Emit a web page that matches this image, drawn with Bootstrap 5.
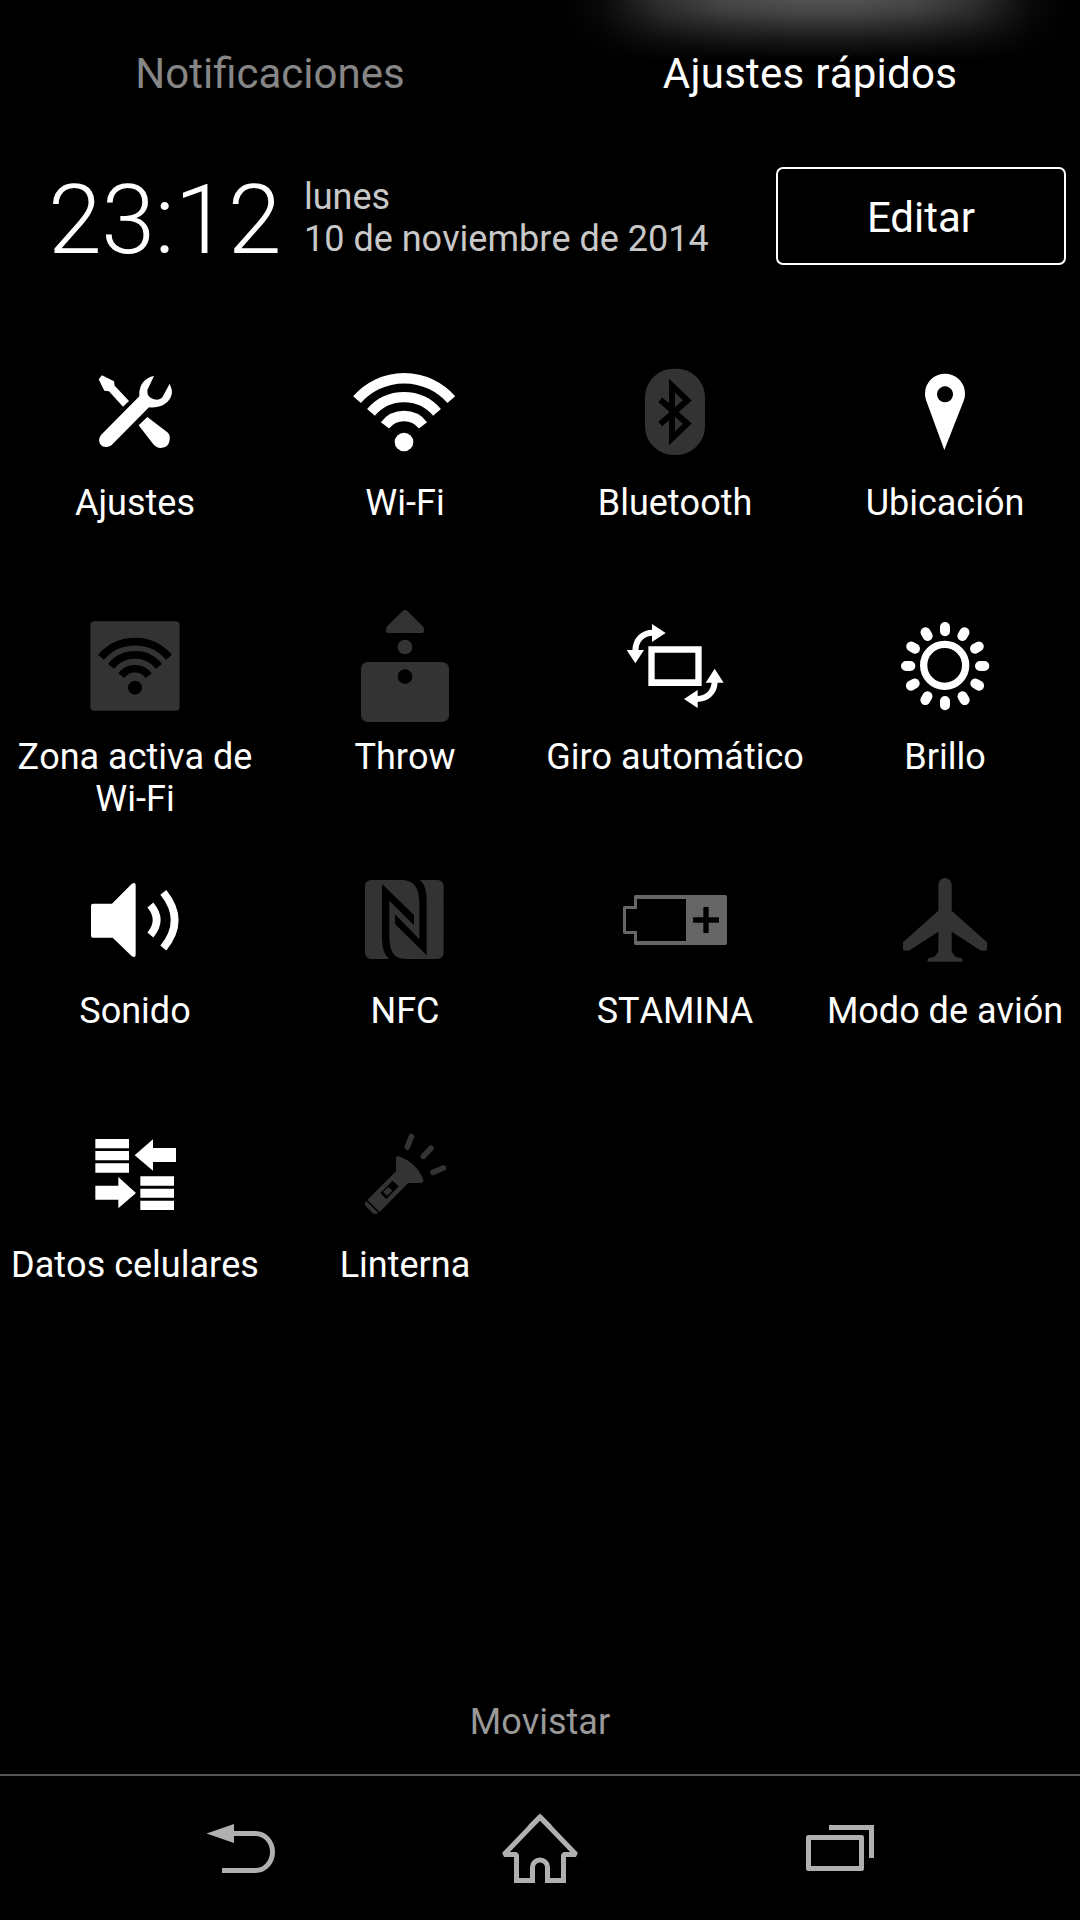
<!DOCTYPE html>
<html lang="es">
<head>
<meta charset="utf-8">
<title>Ajustes rápidos</title>
<link href="https://cdn.jsdelivr.net/npm/bootstrap@5.3.0/dist/css/bootstrap.min.css" rel="stylesheet">
<style>
body{background:#000;color:#fff;font-family:Roboto,"Noto Sans",sans-serif;font-size:36px;line-height:42px;font-kerning:none;}
.screen{width:1080px;height:1920px;}
.glow{top:0;left:562px;width:505px;height:60px;background:linear-gradient(#515151,#464646 20%,#2d2d2d 45%,#131313 72%,#000);-webkit-mask-image:linear-gradient(90deg,transparent,rgba(0,0,0,.12) 8%,rgba(0,0,0,.6) 20%,rgba(0,0,0,.88) 32%,#000 46%,#000 58%,rgba(0,0,0,.88) 70%,rgba(0,0,0,.6) 81%,rgba(0,0,0,.12) 93%,transparent);}
.tabs{height:167px;padding-top:49px;font-size:42px;line-height:49px;}
.tab-off{color:#868686;}
.tab-on{letter-spacing:.25px;}
.clockbar{height:98px;padding:0 14px 0 48px;}
.clock{font-size:97px;font-weight:300;line-height:98px;padding-top:4px;width:256px;letter-spacing:-.5px;}
.date{color:#c8c8c8;padding-top:9px;}
.btn-edit{width:290px;height:98px;border:2px solid #fff;border-radius:7px;color:#fff;font-size:42px;line-height:49px;}
.btn-edit span{display:block;padding-top:2px;}
.tiles{padding-top:87px;}
.tile{height:254px;}
.tile svg{width:120px;height:120px;margin-bottom:10px;fill:#fff;overflow:visible;}
.tile svg.off{fill:#333;}
.tile svg.dim{fill:#666;}
.carrier{color:#999;padding-bottom:31px;}
.navkeys{height:146px;border-top:2px solid #555;}
.navkeys svg{width:300px;height:144px;fill:none;stroke:#b0b0b0;stroke-width:5;}
</style>
</head>
<body>
<div class="screen d-flex flex-column position-relative overflow-hidden">
<div class="glow position-absolute"></div>
<div class="tabs row g-0 text-center position-relative">
<div class="col-6 tab-off">Notificaciones</div>
<div class="col-6 tab-on">Ajustes rápidos</div>
</div>
<div class="clockbar d-flex">
<div class="clock">23:12</div>
<div class="date flex-grow-1"><div>lunes</div><div>10 de noviembre de 2014</div></div>
<button class="btn btn-edit p-0"><span>Editar</span></button>
</div>
<div class="tiles row g-0 text-center">
<div class="tile col-3 d-flex flex-column align-items-center">
<svg viewBox="-15 6 360 360"><path d="M56 88L66 76L102 94L104 107L147 153L129 170L87 124L73 122Z"/><path d="M222 78C195 83 176 103 178 139L63 255C46 278 70 303 95 285L207 172C250 177 281 149 275 118L269 101L247 142C237 154 211 150 203 133L202 120Z"/><path d="M202 201L262 247C269 253 270 260 269 270Q267 293 242 294Q229 294 220 283L176 226Z"/></svg>
<div>Ajustes</div></div>
<div class="tile col-3 d-flex flex-column align-items-center">
<svg viewBox="795 6 360 360"><g fill="none" stroke="#fff" stroke-width="31"><path d="M831 149A188 188 0 0 1 1114 149"/><path d="M873 187A130 130 0 0 1 1071 187"/><path d="M915 226A72 72 0 0 1 1029 226"/></g><circle cx="972" cy="276" r="28"/></svg>
<div>Wi-Fi</div></div>
<div class="tile col-3 d-flex flex-column align-items-center">
<svg class="off" viewBox="45 6 360 360"><rect x="135" y="56" width="180" height="259" rx="86" ry="86"/><path d="M181 149L262 221L216 265V107L262 151L181 222" fill="none" stroke="#000" stroke-width="18"/></svg>
<div>Bluetooth</div></div>
<div class="tile col-3 d-flex flex-column align-items-center">
<svg viewBox="855 6 360 360"><path fill-rule="evenodd" d="M1033 300L978 150Q975 141 975 130A60 59 0 0 1 1095 130Q1095 142 1092 150ZM1035 109a24 24 0 1 0 .1 0Z"/></svg>
<div>Ubicación</div></div>

<div class="tile col-3 d-flex flex-column align-items-center">
<svg class="off" viewBox="15 48 360 360"><rect x="61" y="94" width="268" height="268" rx="12"/><g fill="none" stroke="#000" stroke-width="23"><path d="M93 202A134 134 0 0 1 297 202"/><path d="M123 229A93 93 0 0 1 267 229"/><path d="M154 257A51 51 0 0 1 236 257"/></g><circle cx="195" cy="293" r="21" fill="#000"/></svg>
<div>Zona activa de<br>Wi-Fi</div></div>
<div class="tile col-3 d-flex flex-column align-items-center">
<svg class="off" viewBox="825 48 360 360"><path d="M998 63Q1005 57 1012 63L1057 107Q1062 112 1062 119V123Q1062 129 1056 129H954Q948 129 948 123V119Q948 112 953 107Z"/><circle cx="1005" cy="171" r="22"/><rect x="873" y="216" width="264" height="180" rx="20"/><circle cx="1005" cy="260" r="22" fill="#000"/></svg>
<div>Throw</div></div>
<div class="tile col-3 d-flex flex-column align-items-center">
<svg viewBox="45 18 360 360"><path fill-rule="evenodd" d="M145 139H305V258H145ZM164 158V238H286V158Z"/><path d="M106 152C107 120 127 98 160 98M344 244C344 276 322 297 290 297" fill="none" stroke="#fff" stroke-width="18"/><path d="M156 72L197 99L156 126ZM80 150H132L106 190ZM344 206L371 248H317ZM293 270V324L252 297Z"/></svg>
<div>Giro automático</div></div>
<div class="tile col-3 d-flex flex-column align-items-center">
<svg viewBox="855 18 360 360"><g fill="none" stroke="#fff"><circle cx="1034" cy="196" r="63" stroke-width="22"/><g stroke-width="30" stroke-linecap="round"><path d="M1035 81v13M1035 303v13M918 198h13M1140 198h13"/><path d="M1035 81v13M1035 303v13M918 198h13M1140 198h13" transform="rotate(30 1035 198)"/><path d="M1035 81v13M1035 303v13M918 198h13M1140 198h13" transform="rotate(60 1035 198)"/></g></g></svg>
<div>Brillo</div></div>

<div class="tile col-3 d-flex flex-column align-items-center">
<svg viewBox="15 0 360 360"><path d="M69 131H126L184 73Q188 69 193 69Q197 70 197 76V284Q197 290 193 291Q188 291 184 287L128 233H69Q63 233 63 227V137Q63 131 69 131Z"/><path d="M241 135Q279 180 241 225M280 97Q348 181 280 264" fill="none" stroke="#fff" stroke-width="23"/></svg>
<div>Sonido</div></div>
<div class="tile col-3 d-flex flex-column align-items-center">
<svg class="off" viewBox="825 0 360 360"><path d="M905 60H997C1039 62 1047 92 1048 130V238L975 163V192L1070 286V130C1070 92 1065 73 1049 60H1101Q1121 60 1121 80V277Q1121 297 1101 297H1009C965 297 959 270 958 220V122L1032 196V165L936 72V235C937 264 942 284 958 297H905Q885 297 885 277V80Q885 60 905 60Z"/></svg>
<div>NFC</div></div>
<div class="tile col-3 d-flex flex-column align-items-center">
<svg class="dim" viewBox="45 0 360 360"><path fill-rule="evenodd" d="M106 105H376Q381 105 381 110V250Q381 255 376 255H106Q102 255 102 251V222H73Q69 222 69 218V142Q69 138 73 138H102V109Q102 105 106 105ZM111 117V147H78V213H111V243H258V117ZM313 141Q310 141 310 144V172H282Q279 172 279 175V185Q279 188 282 188H310V216Q310 219 313 219H323Q326 219 326 216V188H354Q357 188 357 185V175Q357 172 354 172H326V144Q326 141 323 141Z"/></svg>
<div>STAMINA</div></div>
<div class="tile col-3 d-flex flex-column align-items-center">
<svg class="off" viewBox="855 0 360 360"><path d="M1015 74A20 20 0 0 1 1055 74V152L1161 247V268Q1161 272 1157 272H1143L1055 215V271Q1058 291 1083 295Q1088 297 1088 301Q1088 305 1084 305H986Q982 305 982 301Q982 297 987 295Q1012 291 1015 271V215L927 272H913Q909 272 909 268V247L1015 152Z"/></svg>
<div>Modo de avión</div></div>

<div class="tile col-3 d-flex flex-column align-items-center">
<svg viewBox="15 12 360 360"><path d="M76 87H177V115H76ZM76 123H177V151H76ZM76 160H177V188H76ZM211 199H312V227H211ZM211 236H312V263H211ZM211 272H312V300H211ZM194 136L249 88V114H318V156H249V182ZM198 249L145 201V227H76V269H145V295Z"/></svg>
<div class="text-nowrap">Datos celulares</div></div>
<div class="tile col-3 d-flex flex-column align-items-center">
<svg class="off" viewBox="825 12 360 360"><path d="M978 143Q980 137 987 139C1025 153 1052 181 1060 211Q1060 219 1053 219H1015L929 306L892 269L978 184ZM889 273L925 309Q915 316 906 308L888 289Q881 280 889 273Z"/><path d="M968 212L986 229L949 267L931 249Z" fill="#000"/><path d="M955 231L967 242L951 257L940 246Z"/><path d="M1024 80L1012 111M1083 115L1060 139M1120 174L1089 187" fill="none" stroke="#333" stroke-width="17" stroke-linecap="round"/></svg>
<div>Linterna</div></div>
</div>
<div class="carrier text-center mt-auto">Movistar</div>
<div class="navkeys d-flex justify-content-center">
<svg viewBox="90 1776 300 144"><path d="M232 1833.5H255.500A17 18.500 0 0 1 255.500 1870.500H222"/><path d="M206.500 1833.500L234 1824V1843Z" fill="#b0b0b0" stroke="none"/></svg>
<svg viewBox="390 1776 300 144"><path stroke-linejoin="bevel" d="M540 1817L504 1854.500H516.500V1880.500H532.500V1867A7.500 7 0 0 1 547.500 1867V1880.500H563.500V1854.500H576Z"/><path d="M516.500 1870V1880.500H532.500V1870M547.500 1870V1880.500H563.500V1870M530 1827L540 1817L550 1827"/></svg>
<svg viewBox="690 1776 300 144"><rect x="808.500" y="1837.500" width="53" height="31" stroke-linejoin="round"/><path d="M829 1827.500H871.500V1858"/></svg>
</div>
</div>
<script src="https://cdn.jsdelivr.net/npm/bootstrap@5.3.0/dist/js/bootstrap.bundle.min.js"></script>
</body>
</html>
